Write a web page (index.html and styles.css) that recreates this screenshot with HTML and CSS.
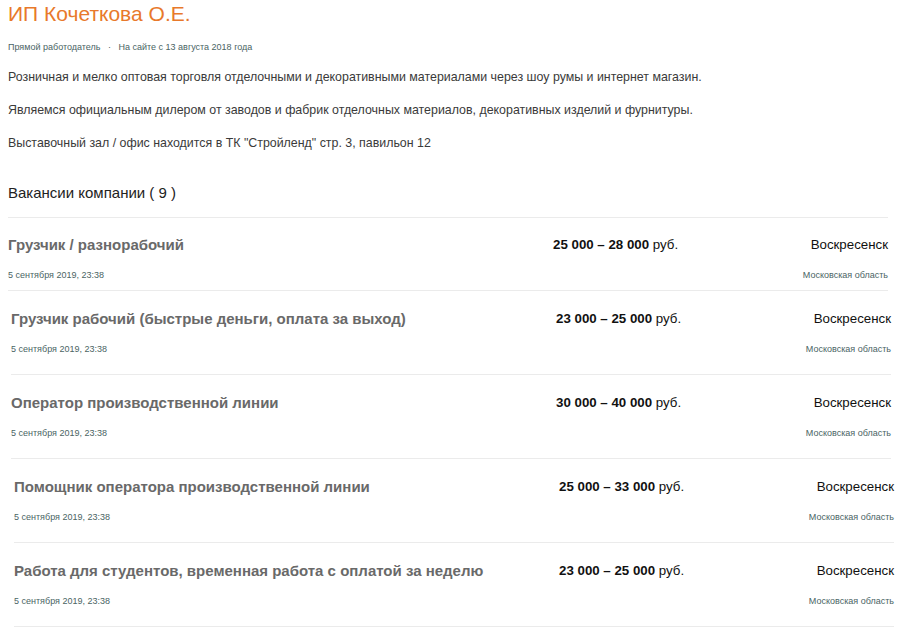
FILE: index.html
```html
<!DOCTYPE html>
<html lang="ru">
<head>
    <meta charset="UTF-8">
    <meta name="viewport" content="width=device-width, initial-scale=1.0">
    <title>ИП Кочеткова О.Е.</title>
    <link rel="stylesheet" href="styles.css">
</head>
<body>
    <div class="page">
        <h1 class="company-name">ИП Кочеткова О.Е.</h1>

        <div class="company-meta">
            <span>Прямой работодатель</span>
            <span class="dot">·</span>
            <span>На сайте с 13 августа 2018 года</span>
        </div>

        <div class="company-about">
            <p>Розничная и мелко оптовая торговля отделочными и декоративными материалами через шоу румы и интернет магазин.</p>
            <p>Являемся официальным дилером от заводов и фабрик отделочных материалов, декоративных изделий и фурнитуры.</p>
            <p>Выставочный зал / офис находится в ТК "Стройленд" стр. 3, павильон 12</p>
        </div>

        <h2 class="vacancies-title">Вакансии компании ( 9 )</h2>

        <ul class="vacancies">
            <li class="vacancy">
                <a class="vacancy-name" href="#">Грузчик / разнорабочий</a>
                <div class="vacancy-salary"><b>25 000 – 28 000</b> руб.</div>
                <div class="vacancy-city">Воскресенск</div>
                <div class="vacancy-date">5 сентября 2019, 23:38</div>
                <div class="vacancy-region">Московская область</div>
            </li>
            <li class="vacancy shift-1">
                <a class="vacancy-name" href="#">Грузчик рабочий (быстрые деньги, оплата за выход)</a>
                <div class="vacancy-salary"><b>23 000 – 25 000</b> руб.</div>
                <div class="vacancy-city">Воскресенск</div>
                <div class="vacancy-date">5 сентября 2019, 23:38</div>
                <div class="vacancy-region">Московская область</div>
            </li>
            <li class="vacancy shift-1">
                <a class="vacancy-name" href="#">Оператор производственной линии</a>
                <div class="vacancy-salary"><b>30 000 – 40 000</b> руб.</div>
                <div class="vacancy-city">Воскресенск</div>
                <div class="vacancy-date">5 сентября 2019, 23:38</div>
                <div class="vacancy-region">Московская область</div>
            </li>
            <li class="vacancy shift-2">
                <a class="vacancy-name" href="#">Помощник оператора производственной линии</a>
                <div class="vacancy-salary"><b>25 000 – 33 000</b> руб.</div>
                <div class="vacancy-city">Воскресенск</div>
                <div class="vacancy-date">5 сентября 2019, 23:38</div>
                <div class="vacancy-region">Московская область</div>
            </li>
            <li class="vacancy shift-2">
                <a class="vacancy-name" href="#">Работа для студентов, временная работа с оплатой за неделю</a>
                <div class="vacancy-salary"><b>23 000 – 25 000</b> руб.</div>
                <div class="vacancy-city">Воскресенск</div>
                <div class="vacancy-date">5 сентября 2019, 23:38</div>
                <div class="vacancy-region">Московская область</div>
            </li>
        </ul>
    </div>
</body>
</html>
```

FILE: styles.css
```css
body {
    font-family: "Liberation Sans", Arial, sans-serif;
    margin: 0;
    background: #fff;
    color: #333;
}

.page {
    width: 880px;
    padding: 1px 8px 0;
}

.company-name {
    font-size: 21px;
    line-height: 26px;
    font-weight: normal;
    color: #e8792b;
    margin: 0;
}

.company-meta {
    margin-top: 13px;
    font-size: 9px;
    line-height: 14px;
    color: #4a6464;
}

.company-meta .dot {
    margin: 0 5px;
}

.company-about {
    margin-top: 15px;
}

.company-about p {
    margin: 0 0 17px;
    font-size: 12.4px;
    line-height: 16px;
    color: #3a3a3a;
}

.vacancies-title {
    margin: 32px 0 0;
    font-size: 15px;
    line-height: 20px;
    font-weight: normal;
    color: #222;
}

.vacancies {
    list-style: none;
    margin: 14px 0 0;
    padding: 0;
    border-top: 1px solid #ebebeb;
}

.vacancy {
    display: grid;
    grid-template-columns: 545px 1fr auto;
    row-gap: 13px;
    width: 100%;
    padding: 18px 0 18px;
    border-bottom: 1px solid #ebebeb;
}

.vacancy:first-child {
    padding: 17px 0 8px;
}

.shift-1 {
    margin-left: 3px;
}

.shift-2 {
    margin-left: 6px;
}

.vacancy-name {
    font-size: 15px;
    line-height: 20px;
    font-weight: bold;
    color: #696969;
    text-decoration: none;
}

.vacancy-salary {
    font-size: 13.3px;
    line-height: 20px;
    color: #111;
}

.vacancy-city {
    font-size: 13.3px;
    line-height: 20px;
    color: #111;
    text-align: right;
}

.vacancy-date,
.vacancy-region {
    font-size: 9px;
    line-height: 14px;
    color: #4a6464;
}

.vacancy-date {
    grid-column: 1 / 3;
}

.vacancy-region {
    text-align: right;
}
```
